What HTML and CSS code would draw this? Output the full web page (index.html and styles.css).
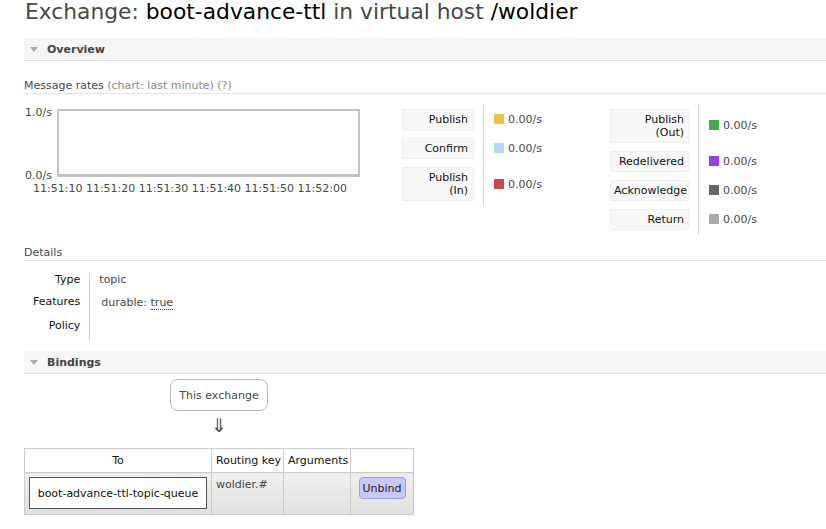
FILE: index.html
```html
<!DOCTYPE html>
<html>
<head>
<meta charset="utf-8">
<title>Exchange: boot-advance-ttl</title>
<link rel="stylesheet" href="styles.css">
</head>
<body>
<h1 class="title">Exchange: <b>boot-advance-ttl</b> in virtual host <b>/woldier</b></h1>

<div class="section">
  <h2 class="section-head"><span class="tri"></span>Overview</h2>
  <div class="section-body">
    <h3 class="sub">Message rates <span class="muted">(chart: last minute) (?)</span></h3>
    <div class="rates">
      <div class="chart">
        <div class="ylabels"><span>1.0/s</span><span>0.0/s</span></div>
        <div class="plot"></div>
        <div class="xlabels">11:51:10 11:51:20 11:51:30 11:51:40 11:51:50 11:52:00</div>
      </div>
      <table class="legend">
        <tr><th><div class="lbox">Publish</div></th><td><span class="sq sq-publish"></span>0.00/s</td></tr>
        <tr><th><div class="lbox">Confirm</div></th><td><span class="sq sq-confirm"></span>0.00/s</td></tr>
        <tr><th><div class="lbox">Publish<br>(In)</div></th><td><span class="sq sq-in"></span>0.00/s</td></tr>
      </table>
      <table class="legend legend-wide">
        <tr><th><div class="lbox">Publish<br>(Out)</div></th><td><span class="sq sq-out"></span>0.00/s</td></tr>
        <tr><th><div class="lbox">Redelivered</div></th><td><span class="sq sq-redel"></span>0.00/s</td></tr>
        <tr><th><div class="lbox">Acknowledge</div></th><td><span class="sq sq-ack"></span>0.00/s</td></tr>
        <tr><th><div class="lbox">Return</div></th><td><span class="sq sq-return"></span>0.00/s</td></tr>
      </table>
    </div>

    <h3 class="sub details">Details</h3>
    <table class="facts">
      <tr><th>Type</th><td>topic</td></tr>
      <tr><th>Features</th><td><span class="feat">durable: <abbr title="durable">true</abbr></span></td></tr>
      <tr><th>Policy</th><td></td></tr>
    </table>
  </div>
</div>

<div class="section">
  <h2 class="section-head"><span class="tri"></span>Bindings</h2>
  <div class="bindings">
    <div class="this-ex">This exchange</div>
    <div class="arrow">&#8659;</div>
    <table class="list">
      <colgroup><col class="c-to"><col class="c-key"><col class="c-args"><col class="c-act"></colgroup>
      <thead>
        <tr><th>To</th><th>Routing key</th><th>Arguments</th><th></th></tr>
      </thead>
      <tbody>
        <tr>
          <td><div class="qbox">boot-advance-ttl-topic-queue</div></td>
          <td>woldier.#</td>
          <td></td>
          <td class="act"><button class="unbind">Unbind</button></td>
        </tr>
      </tbody>
    </table>
  </div>
</div>
</body>
</html>
```

FILE: styles.css
```css
html, body {
  margin: 0;
  padding: 0;
  background: #fff;
}
body {
  padding-left: 24px;
  font-family: "DejaVu Sans", Verdana, sans-serif;
  font-size: 11px;
  line-height: 13px;
  color: #484848;
}
.title {
  margin: 0;
  padding: 0 0 0 1px;
  font-size: 21.8px;
  line-height: 24px;
  font-weight: normal;
  color: #484848;
}
.title b {
  font-weight: normal;
  color: #000;
}
.section-head {
  margin: 14px 0 0 0;
  height: 22px;
  display: flex;
  align-items: center;
  background: #f6f6f6;
  border-bottom: 1px solid #dcdcdc;
  font-size: 11px;
  font-weight: bold;
  color: #444;
}
.tri {
  width: 0;
  height: 0;
  margin: 1px 9px 0 6px;
  border-left: 4px solid transparent;
  border-right: 4px solid transparent;
  border-top: 5px solid #aaa;
}
.sub {
  margin: 18px 0 0 0;
  padding-bottom: 1px;
  border-bottom: 1px solid #e4e4e4;
  font-size: 11px;
  font-weight: normal;
  color: #484848;
}
.muted {
  color: #888;
}
.rates {
  margin-top: 10px;
  display: grid;
  grid-template-columns: 378px 208px auto;
  align-items: start;
  justify-items: start;
}
.chart {
  margin-top: 5px;
  display: grid;
  grid-template-columns: 33px 303px;
  grid-template-rows: 68px auto;
}
.ylabels {
  margin: -3px 0 -5px 1px;
  display: flex;
  flex-direction: column;
  justify-content: space-between;
  color: #484848;
}
.plot {
  box-sizing: border-box;
  border: 2px solid #c2c2c2;
  border-bottom-width: 3px;
  background: #fff;
}
.xlabels {
  grid-column: 1 / 3;
  margin-top: 5px;
  padding-left: 9px;
  white-space: nowrap;
  color: #484848;
}
.legend {
  border-collapse: collapse;
}
.legend th {
  padding: 4px 9px 4px 0;
  font-weight: normal;
  text-align: right;
  vertical-align: top;
}
.legend tr:first-child th {
  padding-top: 5px;
}
.legend td {
  padding: 0 0 0 10px;
  border-left: 1px solid #d0d0d0;
  white-space: nowrap;
  color: #484848;
}
.lbox {
  box-sizing: border-box;
  width: 72px;
  padding: 3px 5px 3px 4px;
  background: #f8f8f8;
  border: 1px solid #efefef;
  border-radius: 2px;
  color: #111;
}
.legend-wide .lbox {
  width: 79px;
  padding-left: 3px;
  padding-right: 4px;
}
.sq {
  display: inline-block;
  width: 10px;
  height: 10px;
  margin-right: 4px;
  vertical-align: -1px;
}
.sq-publish { background: #edc240; }
.sq-confirm { background: #afd8f8; }
.sq-in { background: #cb4b4b; }
.sq-out { background: #4da74d; }
.sq-redel { background: #9440ed; }
.sq-ack { background: #666; }
.sq-return { background: #aaa; }

.details {
  margin-top: 12px;
  padding-bottom: 1px;
}
.facts {
  margin-top: 12px;
  border-collapse: collapse;
}
.facts th {
  box-sizing: content-box;
  width: 46px;
  padding: 0 9px 9px 9px;
  text-align: right;
  vertical-align: top;
  font-weight: normal;
  color: #111;
  border-right: 1px solid #d0d0d0;
}
.facts td {
  padding: 0 0 9px 9px;
  vertical-align: top;
  color: #484848;
}
.facts tr:last-child th,
.facts tr:last-child td {
  padding-bottom: 8px;
}
.feat {
  display: inline-block;
  padding: 1px 2px;
}
abbr {
  text-decoration: none;
  border-bottom: 1px dotted #484848;
}
.section + .section .section-head {
  margin-top: 11px;
}
.bindings {
  width: 390px;
  display: flex;
  flex-direction: column;
  align-items: center;
}
.this-ex {
  margin-top: 5px;
  box-sizing: border-box;
  height: 32px;
  padding: 9px 8px;
  border: 1px solid #bbb;
  border-radius: 8px;
  color: #484848;
}
.arrow {
  margin-top: 3px;
  font-size: 19px;
  line-height: 22px;
  color: #484848;
}
.list {
  margin-top: 12px;
  width: 390px;
  table-layout: fixed;
  border-collapse: collapse;
  border: 1px solid #ccc;
}
.c-to { width: 187px; }
.c-key { width: 72px; }
.c-args { width: 67px; }
.c-act { width: 63px; }
.list th {
  height: 13px;
  padding: 5px 4px 5px;
  border: 1px solid #ccc;
  background: #fff;
  font-weight: normal;
  color: #111;
  white-space: nowrap;
  text-align: center;
}
.list td {
  padding: 4px 4px 5px;
  border: 1px solid #ccc;
  vertical-align: top;
  background: linear-gradient(#efefef, #e0e0e0);
  color: #484848;
  white-space: nowrap;
}
.list td:nth-child(2) {
  padding-top: 5px;
}
.qbox {
  box-sizing: border-box;
  height: 32px;
  padding: 9px 6px;
  border: 1px solid #555;
  background: #fff;
  color: #111;
  text-align: center;
  overflow: hidden;
}
.list td.act {
  text-align: center;
}
.unbind {
  box-sizing: border-box;
  width: 47px;
  height: 22px;
  padding: 0;
  font-family: "DejaVu Sans", Verdana, sans-serif;
  font-size: 11px;
  color: #222;
  background: #c8c8fb;
  border: 1px solid #9a9af0;
  border-radius: 4px;
}
```
